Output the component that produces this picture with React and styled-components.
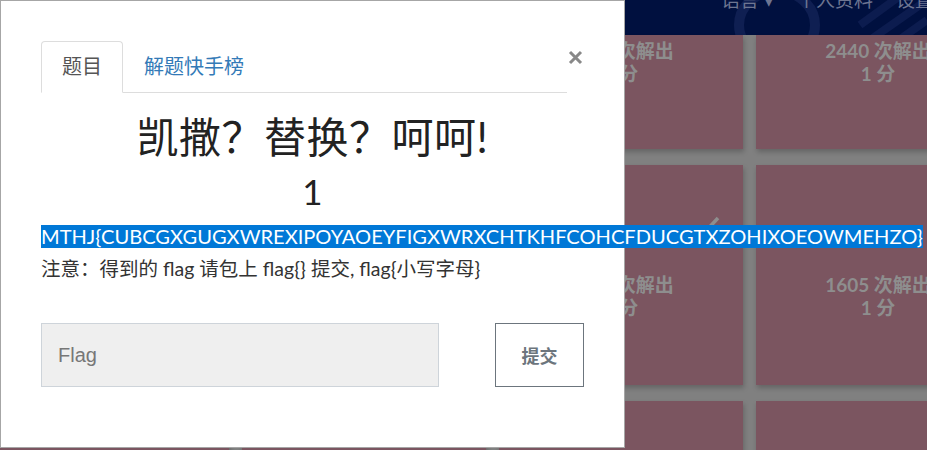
import React from "react";
import styled, { createGlobalStyle } from "styled-components";

const SANS = `"Lato", "Noto Sans CJK SC", sans-serif`;

const Global = createGlobalStyle`
  html, body { margin: 0; padding: 0; }
  body {
    width: 927px;
    height: 450px;
    overflow: hidden;
    background: #808080;
    font-family: ${SANS};
  }
`;

const Page = styled.div`
  position: relative;
  width: 927px;
  height: 450px;
  overflow: hidden;
`;

const Header = styled.header`
  position: relative;
  height: 35px;
  background: #00103f;
  display: flex;
  justify-content: flex-end;
  overflow: hidden;
`;

const Watermark = styled.svg`
  position: absolute;
  left: 700px;
  top: -20px;
`;

const Nav = styled.nav`
  position: relative;
  display: flex;
  align-items: center;
  gap: 23px;
  margin-top: -14px;
  margin-right: -7px;
  height: 24px;
`;

const NavItem = styled.span`
  color: #6d7591;
  font-size: 19px;
  font-family: ${SANS};
  white-space: nowrap;
`;

const Grid = styled.div`
  display: grid;
  grid-template-columns: repeat(4, 244px);
  grid-template-rows: 114px 220px 100px;
  column-gap: 13px;
  row-gap: 16px;
  margin-left: -15px;
`;

const Card = styled.div`
  position: relative;
  background: #7b5560;
  box-shadow: 1px 3px 5px rgba(0, 0, 0, 0.22);
  display: flex;
  flex-direction: column;
  align-items: center;
  padding-top: ${(p) => p.$top || 0}px;
  box-sizing: border-box;
`;

const CardLine = styled.div`
  color: #8e8e8e;
  font-weight: 700;
  font-size: 19px;
  line-height: 23px;
  white-space: nowrap;
`;

const Check = styled.svg`
  position: absolute;
  left: 198px;
  top: 50px;
`;

const Modal = styled.div`
  position: absolute;
  left: 0;
  top: 0;
  width: 625px;
  height: 448px;
  box-sizing: border-box;
  background: #fff;
  border: 1px solid rgba(0, 0, 0, 0.35);
  padding: 40px 40px 0 40px;
  font-family: ${SANS};
  color: #333;
`;

const TopRow = styled.div`
  display: flex;
  align-items: flex-start;
`;

const Tabs = styled.ul`
  flex: 1;
  display: flex;
  list-style: none;
  margin: 0;
  padding: 0;
  border-bottom: 1px solid #ddd;
`;

const Tab = styled.li`
  margin-bottom: -1px;
  padding: 10px 20px 11px;
  font-size: 20px;
  line-height: 29px;
  border: 1px solid ${(p) => (p.$active ? "#ddd" : "transparent")};
  border-bottom-color: ${(p) => (p.$active ? "#fff" : "transparent")};
  border-radius: 4px 4px 0 0;
  background: ${(p) => (p.$active ? "#fff" : "transparent")};
  color: ${(p) => (p.$active ? "#555" : "#337ab7")};
`;

const Close = styled.button`
  border: 0;
  background: none;
  padding: 0;
  margin: 9px 1px 0 1px;
  width: 15px;
  height: 15px;
  display: flex;
  cursor: pointer;
`;

const Title = styled.h2`
  margin: 19px 0 0;
  text-align: center;
  font-weight: 400;
  font-size: 42px;
  line-height: 50px;
  letter-spacing: 0.5px;
  color: #222;
`;

const Value = styled.h3`
  margin: 6px 0 0;
  text-align: center;
  font-weight: 400;
  font-size: 35px;
  line-height: 46px;
  color: #222;
`;

const FlagLine = styled.p`
  margin: 11px 0 0;
  font-size: 20.1px;
  line-height: 23px;
  white-space: nowrap;
`;

const Selected = styled.span`
  display: inline-block;
  background: #0078d7;
  color: #fff;
`;

const Note = styled.p`
  margin: 8px 0 0;
  font-size: 19.5px;
  line-height: 26px;
  color: #333;
  white-space: nowrap;
`;

const Form = styled.form`
  margin-top: 41px;
  display: flex;
  justify-content: space-between;
  width: 543px;
`;

const Input = styled.input`
  width: 398px;
  height: 64px;
  box-sizing: border-box;
  background: #efefef;
  border: 1px solid #ced4da;
  padding: 0 16px;
  font-family: "Liberation Sans", Arial, sans-serif;
  font-size: 20px;
  color: #333;
  outline: none;
  &::placeholder {
    color: #777;
  }
`;

const Submit = styled.button`
  width: 89px;
  height: 64px;
  box-sizing: border-box;
  background: #fff;
  border: 1px solid #6c757d;
  color: #6c757d;
  font-family: "Noto Sans CJK SC", sans-serif;
  font-weight: 700;
  font-size: 18px;
  cursor: pointer;
`;

const cards = [
  { lines: ["1872 次解出", "1 分"], top: 4 },
  { lines: ["2011 次解出", "1 分"], top: 4 },
  { lines: ["2105 次解出", "1 分"], top: 4 },
  { lines: ["2440 次解出", "1 分"], top: 4 },
  { lines: ["1320 次解出", "1 分"], top: 108 },
  { lines: ["1450 次解出", "1 分"], top: 108 },
  { lines: ["1726 次解出", "1 分"], top: 108, check: true },
  { lines: ["1605 次解出", "1 分"], top: 108 },
  { lines: [], top: 0 },
  { lines: [], top: 0 },
  { lines: [], top: 0 },
  { lines: [], top: 0 },
];

export default function App() {
  return (
    <Page>
      <Global />
      <Header>
        <Watermark width="227" height="80" viewBox="0 0 227 80">
          <ellipse cx="77" cy="45" rx="38" ry="34" fill="none" stroke="#0f1f52" strokeWidth="10" />
          <path d="M170 60 L227 20 M185 70 L227 40 M160 45 L215 5" stroke="#0c1c4f" strokeWidth="8" />
        </Watermark>
        <Nav>
          <NavItem>语言 ▾</NavItem>
          <NavItem>个人资料</NavItem>
          <NavItem>设置</NavItem>
        </Nav>
      </Header>
      <Grid>
        {cards.map((c, i) => (
          <Card key={i} $top={c.top}>
            {c.check && (
              <Check width="24" height="20" viewBox="0 0 24 20">
                <path d="M2 11 L8 17 L21 3" fill="none" stroke="#8e8e8e" strokeWidth="3.5" />
              </Check>
            )}
            {c.lines.map((l, j) => (
              <CardLine key={j}>{l}</CardLine>
            ))}
          </Card>
        ))}
      </Grid>

      <Modal>
        <TopRow>
          <Tabs>
            <Tab $active>题目</Tab>
            <Tab>解题快手榜</Tab>
          </Tabs>
          <Close aria-label="关闭">
            <svg width="15" height="15" viewBox="0 0 15 15">
              <path d="M2 2 L13 13 M13 2 L2 13" stroke="#888" strokeWidth="3" />
            </svg>
          </Close>
        </TopRow>
        <Title>凯撒？替换？呵呵!</Title>
        <Value>1</Value>
        <FlagLine>
          <Selected>MTHJ{"{"}CUBCGXGUGXWREXIPOYAOEYFIGXWRXCHTKHFCOHCFDUCGTXZOHIXOEOWMEHZO{"}"}</Selected>
        </FlagLine>
        <Note>注意：得到的 flag 请包上 flag{"{}"} 提交, flag{"{"}小写字母{"}"}</Note>
        <Form onSubmit={(e) => e.preventDefault()}>
          <Input placeholder="Flag" />
          <Submit type="submit">提交</Submit>
        </Form>
      </Modal>
    </Page>
  );
}
